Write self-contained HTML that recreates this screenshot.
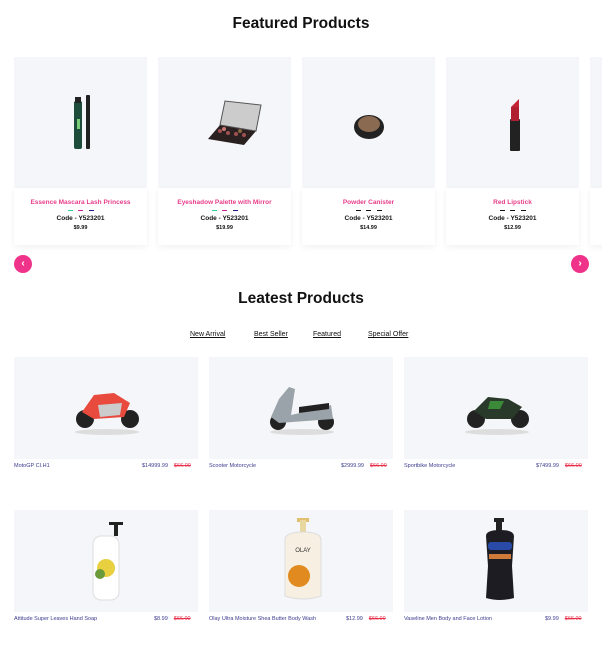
<!DOCTYPE html>
<html><head><meta charset="utf-8"><style>
*{margin:0;padding:0;box-sizing:border-box}
body{width:602px;height:666px;background:#fff;font-family:"Liberation Sans",sans-serif;position:relative;overflow:hidden}
h2{position:absolute;left:0;width:602px;text-align:center;font-size:15.5px;font-weight:bold;color:#111}
.fimg{position:absolute;top:57px;width:133px;height:131px;background:#f5f6fa}
.fcard{position:absolute;top:188px;width:133px;height:57px;background:#fff;box-shadow:0 2px 6px rgba(0,0,0,.06);text-align:center}
.fcard .n{margin-top:11px;font-size:6.5px;color:#e83d8a;font-weight:bold}
.dash{margin:4px auto 0;width:26px;height:2px;display:flex;justify-content:space-between}
.dash i{display:block;width:5px;height:1px;background:#111}
.fcard .c{margin-top:3px;font-size:6.5px;font-weight:bold;color:#111}
.fcard .p{margin-top:3px;font-size:5.5px;font-weight:bold;color:#111}
.arr{position:absolute;top:255px;width:18px;height:18px;border-radius:50%;background:#f0338a;color:#fff;font-size:10px;line-height:17px;text-align:center;font-weight:bold}
.tabs a{position:absolute;top:331px;font-size:7px;color:#111;text-decoration:underline}
.limg{position:absolute;width:184px;height:102px;background:#f5f6fa}
.lt{position:absolute;font-size:5.5px;color:#3b3b8f}
.pr{position:absolute;font-size:5.5px;color:#3b3b8f}
.old{color:#e8304a;text-decoration:line-through;margin-left:6px}
</style></head><body>
<h2 style="top:15px">Featured Products</h2>

<div class="fimg" style="left:14px"><svg width="133" height="131"><rect x="60" y="44" width="8" height="48" rx="2" fill="#1d4d3a"/><rect x="61" y="40" width="6" height="6" fill="#222"/><rect x="72" y="38" width="4" height="54" rx="1" fill="#222"/><rect x="63" y="62" width="3" height="10" fill="#7c7"/></svg></div>
<div class="fimg" style="left:158px"><svg width="133" height="131"><polygon points="50,82 86,88 98,74 62,68" fill="#2a2020"/><polygon points="62,68 98,74 103,48 67,44" fill="#ccc" stroke="#555"/><g fill="#a05050"><circle cx="62" cy="74" r="2"/><circle cx="70" cy="76" r="2"/><circle cx="78" cy="77" r="2"/><circle cx="86" cy="78" r="2"/><circle cx="66" cy="72" r="2" fill="#c77"/><circle cx="82" cy="74" r="2" fill="#864"/></g></svg></div>
<div class="fimg" style="left:302px"><svg width="133" height="131"><ellipse cx="67" cy="70" rx="15" ry="12" fill="#222"/><ellipse cx="67" cy="67" rx="11" ry="8" fill="#8a6a50"/></svg></div>
<div class="fimg" style="left:446px"><svg width="133" height="131"><rect x="64" y="62" width="10" height="32" rx="1" fill="#222"/><rect x="65" y="50" width="8" height="14" fill="#b02030"/><path d="M65 50 L73 42 L73 50Z" fill="#c52535"/></svg></div>
<div class="fimg" style="left:590px"></div>

<div class="fcard" style="left:14px"><div class="n">Essence Mascara Lash Princess</div><div class="dash"><i style="background:#2bd9a0"></i><i style="background:#d020a0"></i><i style="background:#1a1a80"></i></div><div class="c">Code - Y523201</div><div class="p">$9.99</div></div>
<div class="fcard" style="left:158px"><div class="n">Eyeshadow Palette with Mirror</div><div class="dash"><i style="background:#2bd9a0"></i><i style="background:#d020a0"></i><i style="background:#1a1a80"></i></div><div class="c">Code - Y523201</div><div class="p">$19.99</div></div>
<div class="fcard" style="left:302px"><div class="n">Powder Canister</div><div class="dash"><i></i><i></i><i></i></div><div class="c">Code - Y523201</div><div class="p">$14.99</div></div>
<div class="fcard" style="left:446px"><div class="n">Red Lipstick</div><div class="dash"><i></i><i></i><i></i></div><div class="c">Code - Y523201</div><div class="p">$12.99</div></div>
<div class="fcard" style="left:590px"></div>
<div class="arr" style="left:14px">‹</div>
<div class="arr" style="left:571px">›</div>

<h2 style="top:290px">Leatest Products</h2>
<div class="tabs"><a style="left:190px">New Arrival</a><a style="left:254px">Best Seller</a><a style="left:313px">Featured</a><a style="left:368px">Special Offer</a></div>

<div class="limg" style="left:14px;top:357px"><svg width="184" height="102"><ellipse cx="93" cy="75" rx="32" ry="3" fill="#ddd"/><circle cx="71" cy="62" r="9" fill="#222"/><circle cx="116" cy="62" r="9" fill="#222"/><path d="M68 55 L80 38 L100 36 L116 46 L110 60 L80 62Z" fill="#e84a3e"/><path d="M84 48 L108 46 L106 58 L86 60Z" fill="#ccc"/></svg></div>
<div class="limg" style="left:209px;top:357px"><svg width="184" height="102"><ellipse cx="93" cy="75" rx="32" ry="3" fill="#ddd"/><circle cx="69" cy="65" r="8" fill="#222"/><circle cx="117" cy="65" r="8" fill="#222"/><path d="M62 60 L70 42 L80 30 L86 32 L82 58 L108 52 L122 48 L124 62 L70 66Z" fill="#9aa3aa"/><path d="M90 50 L120 46 L120 52 L90 56Z" fill="#222"/></svg></div>
<div class="limg" style="left:404px;top:357px"><svg width="184" height="102"><ellipse cx="93" cy="75" rx="32" ry="3" fill="#ddd"/><circle cx="72" cy="62" r="9" fill="#222"/><circle cx="116" cy="62" r="9" fill="#222"/><path d="M70 54 L84 40 L104 42 L118 50 L108 62 L82 62Z" fill="#2a3a2a"/><path d="M86 44 L100 44 L96 52 L84 52Z" fill="#3a8a3a"/></svg></div>
<div class="lt" style="left:14px;top:463px">MotoGP CI.H1</div><div class="pr" style="left:142px;top:463px">$14999.99<span class="old">$66.00</span></div>
<div class="lt" style="left:209px;top:463px">Scooter Motorcycle</div><div class="pr" style="left:341px;top:463px">$2999.99<span class="old">$66.00</span></div>
<div class="lt" style="left:404px;top:463px">Sportbike Motorcycle</div><div class="pr" style="left:536px;top:463px">$7499.99<span class="old">$66.00</span></div>

<div class="limg" style="left:14px;top:510px"><svg width="184" height="102"><rect x="95" y="12" width="14" height="3" fill="#222"/><rect x="100" y="12" width="4" height="14" fill="#222"/><rect x="79" y="26" width="26" height="64" rx="8" fill="#fff" stroke="#ddd"/><circle cx="92" cy="58" r="9" fill="#e8d040"/><circle cx="86" cy="64" r="5" fill="#6a9a3a"/></svg></div>
<div class="limg" style="left:209px;top:510px"><svg width="184" height="102"><rect x="88" y="8" width="12" height="4" fill="#e0c070"/><rect x="91" y="10" width="6" height="14" fill="#e8d8a0"/><path d="M76 30 Q76 22 94 22 Q112 22 112 30 L112 86 Q94 92 76 86Z" fill="#f7efe2" stroke="#ddd"/><circle cx="90" cy="66" r="11" fill="#e08a20"/><text x="94" y="42" font-size="6" text-anchor="middle" fill="#333" font-family="Liberation Sans">OLAY</text></svg></div>
<div class="limg" style="left:404px;top:510px"><svg width="184" height="102"><rect x="90" y="8" width="10" height="4" fill="#222"/><rect x="92" y="10" width="6" height="12" fill="#222"/><path d="M82 26 Q82 20 96 20 Q110 20 110 26 L108 56 L110 88 Q96 92 82 88 L84 56Z" fill="#1c1c22"/><rect x="84" y="32" width="24" height="8" rx="3" fill="#2a4aa8"/><rect x="85" y="44" width="22" height="5" fill="#d07a3a"/></svg></div>
<div class="lt" style="left:14px;top:616px">Attitude Super Leaves Hand Soap</div><div class="pr" style="left:154px;top:616px">$8.99<span class="old">$66.00</span></div>
<div class="lt" style="left:209px;top:616px">Olay Ultra Moisture Shea Butter Body Wash</div><div class="pr" style="left:346px;top:616px">$12.99<span class="old">$66.00</span></div>
<div class="lt" style="left:404px;top:616px">Vaseline Men Body and Face Lotion</div><div class="pr" style="left:545px;top:616px">$9.99<span class="old">$66.00</span></div>
</body></html>
